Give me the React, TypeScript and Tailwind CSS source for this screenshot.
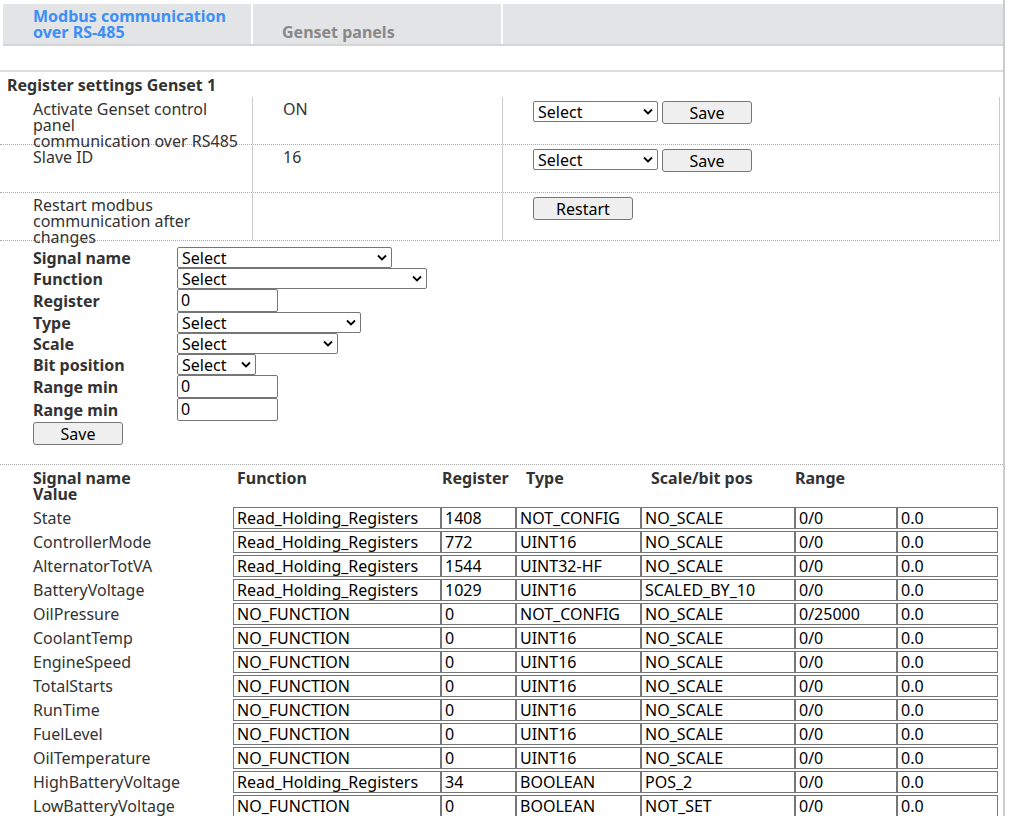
const rows: string[][] = [
  ['State', 'Read_Holding_Registers', '1408', 'NOT_CONFIG', 'NO_SCALE', '0/0', '0.0'],
  ['ControllerMode', 'Read_Holding_Registers', '772', 'UINT16', 'NO_SCALE', '0/0', '0.0'],
  ['AlternatorTotVA', 'Read_Holding_Registers', '1544', 'UINT32-HF', 'NO_SCALE', '0/0', '0.0'],
  ['BatteryVoltage', 'Read_Holding_Registers', '1029', 'UINT16', 'SCALED_BY_10', '0/0', '0.0'],
  ['OilPressure', 'NO_FUNCTION', '0', 'NOT_CONFIG', 'NO_SCALE', '0/25000', '0.0'],
  ['CoolantTemp', 'NO_FUNCTION', '0', 'UINT16', 'NO_SCALE', '0/0', '0.0'],
  ['EngineSpeed', 'NO_FUNCTION', '0', 'UINT16', 'NO_SCALE', '0/0', '0.0'],
  ['TotalStarts', 'NO_FUNCTION', '0', 'UINT16', 'NO_SCALE', '0/0', '0.0'],
  ['RunTime', 'NO_FUNCTION', '0', 'UINT16', 'NO_SCALE', '0/0', '0.0'],
  ['FuelLevel', 'NO_FUNCTION', '0', 'UINT16', 'NO_SCALE', '0/0', '0.0'],
  ['OilTemperature', 'NO_FUNCTION', '0', 'UINT16', 'NO_SCALE', '0/0', '0.0'],
  ['HighBatteryVoltage', 'Read_Holding_Registers', '34', 'BOOLEAN', 'POS_2', '0/0', '0.0'],
  ['LowBatteryVoltage', 'NO_FUNCTION', '0', 'BOOLEAN', 'NOT_SET', '0/0', '0.0'],
]

const widths = ['w-[208px]', 'w-[75px]', 'w-[125px]', 'w-[154px]', 'w-[102px]', 'w-[101px]']

function Sel({ w }: { w: string }) {
  return (
    <div className={`${w} h-[21px] border border-[#767676] rounded-[2px] bg-white flex items-center justify-between px-[4px] text-[16px] leading-none text-black`}>
      <span>Select</span>
      <svg width="10" height="7" viewBox="0 0 10 7"><path d="M1 1.5l4 4 4-4" stroke="#000" strokeWidth="1.8" fill="none" /></svg>
    </div>
  )
}

function Btn({ label, w }: { label: string; w: string }) {
  return (
    <div className={`${w} h-[23px] border border-[#767676] rounded-[3px] bg-[#efefef] flex items-center justify-center text-[16px] text-black`}>{label}</div>
  )
}

function Inp({ v }: { v: string }) {
  return <div className="w-[101px] h-[23px] border border-[#767676] rounded-[2px] bg-white px-[3px] text-[16px] leading-[21px] text-black">{v}</div>
}

export default function App() {
  const form: [string, React.ReactNode][] = [
    ['Signal name', <Sel w="w-[215px]" />],
    ['Function', <Sel w="w-[250px]" />],
    ['Register', <Inp v="0" />],
    ['Type', <Sel w="w-[184px]" />],
    ['Scale', <Sel w="w-[161px]" />],
    ['Bit position', <Sel w="w-[79px]" />],
    ['Range min', <Inp v="0" />],
    ['Range min', <Inp v="0" />],
  ]
  const settings = [
    { l: ['Activate Genset control panel', 'communication over RS485'], v: 'ON', c: <div className="flex gap-[4px] mt-[4px]"><Sel w="w-[125px]" /><Btn label="Save" w="w-[90px]" /></div> },
    { l: ['Slave ID'], v: '16', c: <div className="flex gap-[4px] mt-[4px]"><Sel w="w-[125px]" /><Btn label="Save" w="w-[90px]" /></div> },
    { l: ['Restart modbus', 'communication after changes'], v: '', c: <div className="mt-[4px]"><Btn label="Restart" w="w-[100px]" /></div> },
  ]
  return (
    <div className="w-[1010px] h-[816px] overflow-hidden bg-white text-[#333] text-[16px] font-['Liberation_Sans'] relative">
      <div className="absolute right-[5px] top-0 h-full w-[2px] bg-[#ccc]" />
      <div className="pt-[4px] pl-[3px] w-[1003px]">
        <div className="flex h-[42px] bg-[#e3e4e6] border-b-[2px] border-[#d4d5d7]">
          <div className="w-[250px] border-r-[2px] border-white pl-[30px] pt-[4px] text-[#3d8ef5] font-bold leading-[16px]">Modbus communication<br />over RS-485</div>
          <div className="w-[250px] border-r-[2px] border-white pl-[29px] pt-[20px] text-[#888] font-bold leading-[16px]">Genset panels</div>
          <div className="flex-1" />
        </div>
      </div>
      <div className="mt-[24px] h-[2px] w-[1003px] bg-[#ddd]" />
      <div className="pl-[7px] pt-[4px] font-bold leading-[18px]">Register settings Genset 1</div>
      <div className="w-[1000px] mt-[3px]">
        {settings.map((s, i) => (
          <div key={i} className="flex h-[48px] leading-[16px] border-b border-dotted border-[#aaa]">
            <div className="w-[253px] pl-[33px] pt-[4px] border-r border-[#ccc]">{s.l.map((t, j) => <div key={j}>{t}</div>)}</div>
            <div className="w-[250px] pl-[30px] pt-[4px] border-r border-[#ccc]">{s.v}</div>
            <div className="flex-1 pl-[30px] border-r border-[#ccc]">{s.c}</div>
          </div>
        ))}
      </div>
      <div className="pl-[33px] pt-[6px] flex flex-col">
        {form.map(([l, c], i) => (
          <div key={i} className="flex items-center">
            <div className="w-[144px] font-bold leading-[18px]">{l}</div>
            {c}
          </div>
        ))}
        <div className="mt-[1px]"><Btn label="Save" w="w-[90px]" /></div>
      </div>
      <div className="mt-[19px] w-[1003px] border-t border-dotted border-[#aaa]" />
      <div className="flex pt-[5px] font-bold leading-[16px]">
        <div className="w-[237px] pl-[33px]">Signal name<br />Value</div>
        <div className="w-[205px]">Function</div>
        <div className="w-[84px]">Register</div>
        <div className="w-[125px]">Type</div>
        <div className="w-[144px]">Scale/bit pos</div>
        <div>Range</div>
      </div>
      <div className="flex flex-col mt-[4px]">
        {rows.map((r, i) => (
          <div key={i} className="flex h-[24px] items-center">
            <div className="w-[233px] pl-[33px]">{r[0]}</div>
            {r.slice(1).map((c, j) => (
              <div key={j} className={`${widths[j]} h-[22px] border border-[#767676] px-[3px] leading-[20px] text-black`}>{c}</div>
            ))}
          </div>
        ))}
      </div>
    </div>
  )
}
